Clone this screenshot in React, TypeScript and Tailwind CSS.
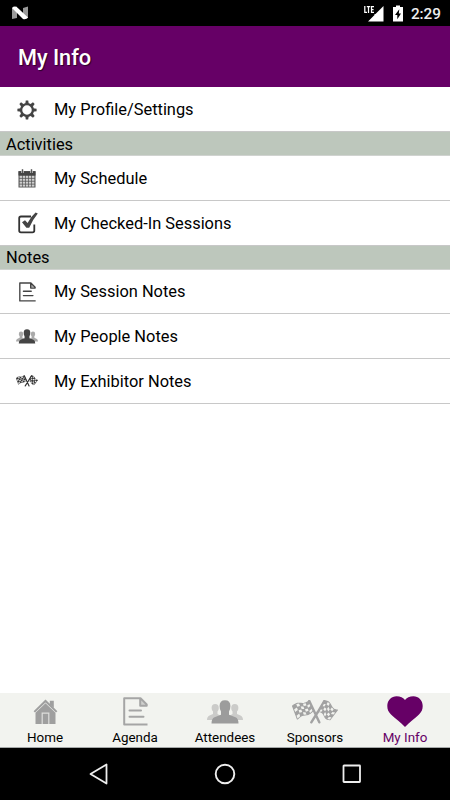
import type { ReactNode } from "react";

function Gear() {
  return (
    <svg width="20" height="20" viewBox="0 0 20 20">
      <g fill="#444">
        {[0, 45, 90, 135, 180, 225, 270, 315].map((a) => (
          <path key={a} d="M8.2 4 L8.8 0.4 H11.2 L11.8 4 Z" transform={`rotate(${a} 10 10)`} />
        ))}
      </g>
      <circle cx="10" cy="10" r="5.9" fill="none" stroke="#444" strokeWidth="2.3" />
    </svg>
  );
}

function Calendar() {
  return (
    <svg width="18" height="19" viewBox="0 0 18 19">
      <path d="M0.5 2.2 H17.5 V18.5 H0.5 Z" fill="#555" />
      <path d="M0.5 2.2 H17.5 V6.5 H0.5 Z" fill="#444" />
      <path d="M4.5 0.3 V4 M13.5 0.3 V4" stroke="#ddd" strokeWidth="2.4" />
      <path d="M4.5 0.3 V4 M13.5 0.3 V4" stroke="#555" strokeWidth="1.2" />
      {[6.8, 9.7, 12.6, 15.5].map((y) =>
        [1.6, 4.7, 7.8, 10.9, 14].map((x) => (
          <rect key={`${x}-${y}`} x={x} y={y} width="2.4" height="2.1" fill="#cfcfcf" />
        )),
      )}
    </svg>
  );
}

function Check() {
  return (
    <svg className="ml-px" width="20" height="22" viewBox="0 0 20 22" fill="none">
      <path d="M13 4.5 H3 Q1.2 4.5 1.2 6.3 V18.5 Q1.2 20.3 3 20.3 H14.5 Q16.3 20.3 16.3 18.5 V12.5" stroke="#333" strokeWidth="1.8" />
      <path d="M4 10.2 L7 8.2 L9.6 10.9 Q13 4.5 17.6 0.6 L19.8 1.6 Q14.5 8 11.2 15.8 H8.4 Z" fill="#444" />
    </svg>
  );
}

function NoteIcon({ w, h, color, stroke, className = "" }: { w: number; h: number; color: string; stroke: number; className?: string }) {
  return (
    <svg className={className} width={w} height={h} viewBox="0 0 25 29" fill="none" stroke={color} strokeWidth={stroke}>
      <path d="M24.5 27.6 H1.2 V1.2 H17.5 L23.7 7.5 V8.8 H17.2 V1.2" strokeLinejoin="round" />
      <path d="M17.5 2 L23 8 H17.5 Z" fill={color} fillOpacity="0.45" stroke="none" />
      <path d="M6.5 13.4 H18 M6.5 19.8 H20.5" strokeLinecap="round" />
    </svg>
  );
}

function People({ w, h, front, back }: { w: number; h: number; front: string; back: string }) {
  return (
    <svg width={w} height={h} viewBox="0 0 36 24">
      <g fill={back}>
        <path d="M0 20 Q0 16.5 2.5 15.5 L6 14 V11.5 Q4.6 10 4.6 8 Q4.6 4 8.2 4 Q11.8 4 11.8 8 Q11.8 10 10.5 11.5 V14 L14 16 V20 Z" />
        <path d="M36 20 Q36 16.5 33.5 15.5 L30 14 V11.5 Q31.4 10 31.4 8 Q31.4 4 27.8 4 Q24.2 4 24.2 8 Q24.2 10 25.5 11.5 V14 L22 16 V20 Z" />
      </g>
      <path d="M4.5 23.5 Q4.5 18.5 7.5 17.3 L14 14.8 V11.5 Q12.6 9.5 12.6 6 Q12.6 0.3 18 0.3 Q23.4 0.3 23.4 6 Q23.4 9.5 22 11.5 V14.8 L28.5 17.3 Q31.5 18.5 31.5 23.5 Z" fill={front} />
    </svg>
  );
}

type Point = [number, number];
type Quad = [Point, Point, Point, Point];

const COLS = 5;
const ROWS = 4;

// Corners run from the pole top, to the free top, the free bottom and the pole bottom.
const LEFT: Quad = [[17.2, 0.8], [0.6, 6], [5.4, 19], [21, 10.8]];
const RIGHT: Quad = [[32.4, 0.8], [45.4, 10], [38, 19.6], [26.4, 11.6]];

// Position on a waving cloth, u away from the pole and v down it.
function cloth(q: Quad, u: number, v: number) {
  const mix = (k: 0 | 1) =>
    (1 - v) * ((1 - u) * q[0][k] + u * q[1][k]) + v * ((1 - u) * q[3][k] + u * q[2][k]);
  const wave = Math.sin(u * Math.PI * 2) * 1.1;
  const x = mix(0) + (q === RIGHT ? wave * 0.7 : 0);
  const y = mix(1) + (q === RIGHT ? -wave : wave);
  return `${x.toFixed(2)},${y.toFixed(2)}`;
}

function Cloth({ q, color, hole }: { q: Quad; color: string; hole: string }) {
  const edge: string[] = [];
  for (let i = 0; i <= 10; i++) edge.push(cloth(q, i / 10, 0));
  for (let i = 10; i >= 0; i--) edge.push(cloth(q, i / 10, 1));
  const holes: string[] = [];
  for (let c = 0; c < COLS; c++)
    for (let r = 0; r < ROWS; r++)
      if ((c + r) % 2 === 1) {
        const a = (c + 0.08) / COLS, b = (c + 0.92) / COLS;
        const t = (r + 0.08) / ROWS, e = (r + 0.92) / ROWS;
        holes.push([cloth(q, a, t), cloth(q, b, t), cloth(q, b, e), cloth(q, a, e)].join(" "));
      }
  return (
    <>
      <polygon points={edge.join(" ")} fill={color} stroke={color} strokeWidth="1.2" strokeLinejoin="round" />
      {holes.map((p) => (
        <polygon key={p} points={p} fill={hole} />
      ))}
    </>
  );
}

function Flags({ w, h, color, hole }: { w: number; h: number; color: string; hole: string }) {
  return (
    <svg width={w} height={h} viewBox="0 0 46 24">
      <Cloth q={LEFT} color={color} hole={hole} />
      <Cloth q={RIGHT} color={color} hole={hole} />
      <path d="M17.3 1 L27.3 22.3 M32.3 1 L25.8 12 L19.3 22.3" fill="none" stroke={color} strokeWidth="2.4" strokeLinecap="round" />
    </svg>
  );
}

function House() {
  return (
    <svg width="25" height="26" viewBox="0 0 25 26">
      <g fill="#9f9f9f">
        <path d="M16.8 1.8 H20.8 V9 L16.8 5.5 Z" />
        <path d="M12.5 0.6 L24.4 12.2 L23 13.6 L12.5 3.5 L2 13.6 L0.6 12.2 Z" />
        <path d="M12.5 4.2 L22.5 13.8 V25 H2.5 V13.8 Z" />
      </g>
      <path d="M9.2 25 V14.2 H15.8 V25" fill="none" stroke="#dededc" strokeWidth="1.2" />
    </svg>
  );
}

function Heart() {
  return (
    <svg width="36" height="31" viewBox="0 0 36 31">
      <path d="M18 31 C14 26.5 8 22.5 4 18.5 C1.5 16 0.3 13.5 0.3 10 C0.3 4.5 4.5 0.3 9.6 0.3 C13.2 0.3 16.5 2 18 4 C19.5 2 22.8 0.3 26.4 0.3 C31.5 0.3 35.7 4.5 35.7 10 C35.7 13.5 34.5 16 32 18.5 C28 22.5 22 26.5 18 31 Z" fill="#660066" />
    </svg>
  );
}

function Row({ icon, label, className = "h-[45px]" }: { icon: ReactNode; label: string; className?: string }) {
  return (
    <div className={`flex items-center border-b border-[#c8c8c8] ${className}`}>
      <div className="flex w-[54px] justify-center">{icon}</div>
      <div className="pt-px text-[16.4px] leading-5">{label}</div>
    </div>
  );
}

function Section({ label, className = "" }: { label: string; className?: string }) {
  return (
    <div className={`flex h-6 items-center border-b border-[#d0d3d0] bg-[#bdc7bc] pl-[6px] text-[16.4px] leading-5 ${className}`}>
      {label}
    </div>
  );
}

function Tab({ icon, label, active = false }: { icon: ReactNode; label: string; active?: boolean }) {
  return (
    <div className="flex w-[90px] flex-col items-center">
      <div className="flex h-[37px] items-center justify-center">{icon}</div>
      <div className={`text-[13.4px] leading-4 ${active ? "text-[#660066]" : "text-black"}`}>{label}</div>
    </div>
  );
}

export default function App() {
  return (
    <div className="flex h-[800px] w-[450px] flex-col overflow-hidden bg-white font-['Roboto',sans-serif] text-black">
      <div className="flex h-[26px] shrink-0 items-center bg-black pl-[11px] pr-[9px]">
        <svg width="18" height="14" viewBox="0 0 18 14">
          <path d="M1 2 L6 0.8 V12 L1 13 Z M12 2 L17 0.5 V12 L12 13 Z" fill="#999" />
          <path d="M1 2 Q2.5 0 5.5 0.8 L17 11.5 Q15 14 12 13 Z" fill="#fff" />
        </svg>
        <div className="ml-auto flex items-center">
          <svg width="20" height="17" viewBox="0 0 20 17">
            <path d="M19.5 1 V16.5 H4 L10.5 10 V9 H11.5 Z" fill="#fff" />
            <path d="M0.8 1 V7.3 H3 M2.8 1.6 H6.2 M4.5 1.6 V8 M10 1.6 H7.5 V7.4 H10 M7.5 4.5 H9.6" fill="none" stroke="#fff" strokeWidth="1.25" />
          </svg>
          <svg className="ml-[9px]" width="10" height="17" viewBox="0 0 10 17">
            <path d="M3 0.5 H7 V2 H10 V16.5 H0 V2 H3 Z" fill="#fff" />
            <path d="M6.3 4.2 L2 10 H4.3 V14.2 L8 8.4 H5.8 Z" fill="#000" />
          </svg>
          <div className="ml-[8px] pt-px text-[15.3px] font-medium leading-5 text-[#eee]">2:29</div>
        </div>
      </div>
      <div className="flex h-[61px] shrink-0 items-center bg-[#660066] pl-[18px] pt-[2px] text-[21.7px] font-medium leading-7 text-white [text-shadow:1px_1px_1px_rgba(0,0,0,0.6)]">
        My Info
      </div>
      <div className="flex-1">
        <Row className="h-[45px] pt-px" icon={<Gear />} label="My Profile/Settings" />
        <Section className="pt-[2px]" label="Activities" />
        <Row icon={<Calendar />} label="My Schedule" />
        <Row icon={<Check />} label="My Checked-In Sessions" />
        <Section className="pt-px" label="Notes" />
        <Row className="h-[44px]" icon={<NoteIcon className="ml-px" w={17} h={20} color="#444" stroke={2} />} label="My Session Notes" />
        <Row className="h-[45px]" icon={<People w={22} h={15} front="#444" back="#aaa" />} label="My People Notes" />
        <Row className="h-[45px]" icon={<Flags w={22} h={12} color="#333" hole="#fff" />} label="My Exhibitor Notes" />
      </div>
      <div className="flex h-[55px] shrink-0 border-b border-[#a5a8a8] bg-[#f2f3ef]">
        <Tab icon={<House />} label="Home" />
        <Tab icon={<NoteIcon w={25} h={29} color="#a5a5a5" stroke={2} />} label="Agenda" />
        <Tab icon={<People w={36} h={24} front="#9c9c9c" back="#cbcbc9" />} label="Attendees" />
        <Tab icon={<Flags w={46} h={24} color="#a2a2a2" hole="#f2f3ef" />} label="Sponsors" />
        <Tab active icon={<Heart />} label="My Info" />
      </div>
      <div className="flex h-[52px] shrink-0 items-center justify-between bg-black pl-[88px] pr-[88px]">
        <svg width="20" height="22" viewBox="0 0 20 22">
          <path d="M18.5 1.5 V20.5 L2.5 11 Z" fill="none" stroke="#eee" strokeWidth="1.8" strokeLinejoin="round" />
        </svg>
        <svg width="22" height="22" viewBox="0 0 22 22">
          <circle cx="11" cy="11" r="9.3" fill="none" stroke="#eee" strokeWidth="1.9" />
        </svg>
        <svg width="20" height="20" viewBox="0 0 20 20">
          <rect x="1.5" y="1.5" width="16.5" height="16.5" rx="0.5" fill="none" stroke="#eee" strokeWidth="1.8" />
        </svg>
      </div>
    </div>
  );
}
